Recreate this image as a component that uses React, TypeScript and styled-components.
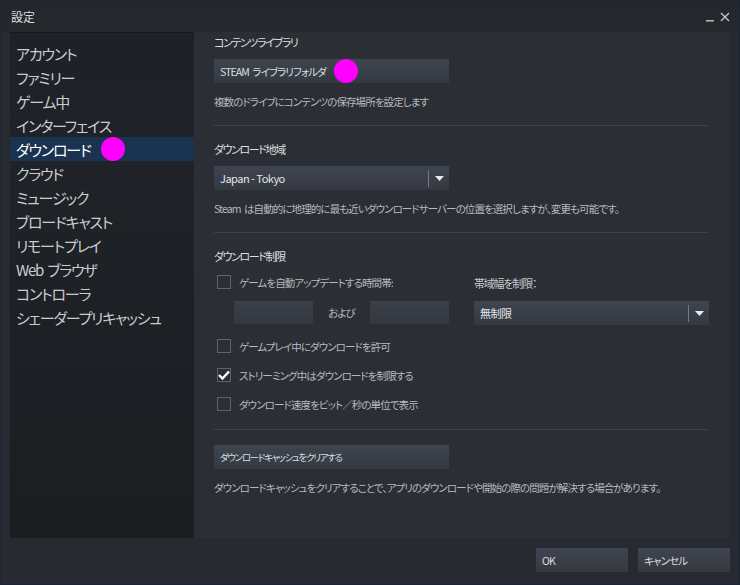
import React from "react";
import styled, { createGlobalStyle } from "styled-components";

const GlobalStyle = createGlobalStyle`
    html, body {
        margin: 0;
        padding: 0;
        background: #22252a;
    }
    * {
        box-sizing: border-box;
    }
`;

const fontStack = `"Noto Sans CJK JP", "Noto Sans", "Liberation Sans", sans-serif`;

const Window = styled.div`
    width: 740px;
    height: 585px;
    display: flex;
    flex-direction: column;
    background: #272a30;
    border: 1px solid #1a2536;
    font-family: ${fontStack};
    font-feature-settings: "palt";
    word-spacing: 2px;
    color: #dcdedf;
    overflow: hidden;
`;

const TitleBar = styled.header`
    height: 31px;
    flex: none;
    display: flex;
    align-items: center;
    justify-content: space-between;
    padding: 0 9px 0 10px;
    background: #24272c;
    font-size: 12px;
`;

const WindowControls = styled.div`
    display: flex;
    align-items: center;
    gap: 6px;
`;

const Body = styled.div`
    flex: 1;
    display: flex;
    padding: 0 10px 0 9px;
    min-height: 0;
`;

const Sidebar = styled.nav`
    width: 184px;
    flex: none;
    display: flex;
    flex-direction: column;
    padding-top: 8px;
    background: linear-gradient(180deg, #1e2129 0%, #1f2227 30%, #1b1d21 100%);
    border-top: 1px solid #15171b;
`;

const NavItem = styled.div<{ $active?: boolean }>`
    height: 24px;
    display: flex;
    align-items: center;
    gap: 10px;
    padding-left: 6px;
    font-size: 15px;
    letter-spacing: -1.2px;
    color: ${(p) => (p.$active ? "#ffffff" : "#c9cdd0")};
    background: ${(p) => (p.$active ? "#1a3350" : "transparent")};
    white-space: nowrap;
`;

const Dot = styled.span`
    width: 24px;
    height: 24px;
    border-radius: 50%;
    background: #ff00ff;
    flex: none;
`;

const Content = styled.main`
    flex: 1;
    display: flex;
    flex-direction: column;
    padding: 2px 21px 0 20px;
    background: #2b2e34;
    min-width: 0;
`;

const SectionTitle = styled.div`
    height: 16px;
    line-height: 16px;
    font-size: 11px;
    letter-spacing: -1.4px;
    color: #dcdedf;
`;

const Description = styled.div`
    height: 16px;
    line-height: 16px;
    font-size: 10.5px;
    letter-spacing: -0.9px;
    color: #b6babe;
    margin-top: 11px;
    white-space: nowrap;
`;

const Separator = styled.hr`
    border: none;
    height: 1px;
    background: #3d4148;
    margin: 15px 0;
`;

const GreyButton = styled.div<{ $small?: boolean }>`
    width: 235px;
    height: 24px;
    display: flex;
    align-items: center;
    gap: 8px;
    padding-left: 6px;
    margin-top: 9px;
    background: linear-gradient(180deg, #3f4550 0%, #343941 100%);
    font-size: ${(p) => (p.$small ? "9.5px" : "10.5px")};
    letter-spacing: ${(p) => (p.$small ? "-1.3px" : "-0.9px")};
    color: #dcdedf;
    white-space: nowrap;
`;

const Select = styled.div<{ $width: number }>`
    width: ${(p) => p.$width}px;
    height: 24px;
    display: flex;
    align-items: center;
    background: linear-gradient(180deg, #3f4550 0%, #343941 100%);
    font-size: 11px;
    letter-spacing: -0.5px;
    word-spacing: 0;
    color: #e4e6e8;
`;

const SelectValue = styled.span`
    flex: 1;
    padding-left: 6px;
`;

const SelectDivider = styled.span`
    width: 1px;
    height: 17px;
    background: #737a84;
`;

const SelectArrow = styled.span`
    width: 20px;
    display: flex;
    justify-content: center;
    align-items: center;
`;

const LimitGrid = styled.div`
    display: grid;
    grid-template-columns: 235px 235px;
    column-gap: 25px;
    margin-top: 9px;
`;

const CheckRow = styled.label<{ $top?: number }>`
    display: flex;
    align-items: center;
    height: 16px;
    gap: 8px;
    padding-left: 3px;
    margin-top: ${(p) => p.$top ?? 0}px;
    font-size: 10.5px;
    letter-spacing: -0.9px;
    color: #b6babe;
    white-space: nowrap;
`;

const Box = styled.span`
    width: 14px;
    height: 14px;
    flex: none;
    border: 1px solid #5d636b;
    display: flex;
    align-items: center;
    justify-content: center;
`;

const TimeRow = styled.div`
    display: flex;
    align-items: center;
    margin-top: 11px;
    padding-left: 20px;
    font-size: 10.5px;
    letter-spacing: -0.9px;
    color: #b6babe;
`;

const TimeInput = styled.div`
    width: 79px;
    height: 23px;
    background: linear-gradient(180deg, #3a3f48 0%, #343941 100%);
`;

const AndLabel = styled.span`
    width: 57px;
    text-align: center;
`;

const RightColumn = styled.div`
    display: flex;
    flex-direction: column;
`;

const RightLabel = styled.div`
    height: 16px;
    line-height: 16px;
    margin-top: 2px;
    margin-bottom: 10px;
    font-size: 11px;
    letter-spacing: -1.2px;
    color: #c6cacd;
`;

const Footer = styled.footer`
    height: 46px;
    flex: none;
    display: flex;
    justify-content: flex-end;
    align-items: flex-start;
    gap: 10px;
    padding: 10px 9px 0 0;
`;

const FooterButton = styled.div`
    width: 92px;
    height: 24px;
    display: flex;
    align-items: center;
    padding-left: 6px;
    background: linear-gradient(180deg, #3f4550 0%, #343941 100%);
    font-size: 10.5px;
    letter-spacing: -0.9px;
    color: #dcdedf;
`;

const Arrow = () => (
    <svg width="9" height="5" viewBox="0 0 9 5">
        <path d="M0 0 H9 L4.5 5 Z" fill="#e8eaec" />
    </svg>
);

const Check = () => (
    <svg width="12" height="10" viewBox="0 0 12 10">
        <path d="M1 5 L4.5 8.5 L11 1.5" stroke="#ffffff" strokeWidth="2.4" fill="none" />
    </svg>
);

const navItems = [
    "アカウント",
    "ファミリー",
    "ゲーム中",
    "インターフェイス",
    "ダウンロード",
    "クラウド",
    "ミュージック",
    "ブロードキャスト",
    "リモートプレイ",
    "Web ブラウザ",
    "コントローラ",
    "シェーダープリキャッシュ",
];

const App = () => {
    return (
        <>
            <GlobalStyle />
            <Window>
                <TitleBar>
                    <span>設定</span>
                    <WindowControls>
                        <svg width="8" height="10" viewBox="0 0 8 10">
                            <rect x="0" y="8" width="8" height="1.5" fill="#b8bcbf" />
                        </svg>
                        <svg width="10" height="10" viewBox="0 0 10 10">
                            <path d="M1 1 L9 9 M9 1 L1 9" stroke="#c0c4c8" strokeWidth="1.4" />
                        </svg>
                    </WindowControls>
                </TitleBar>
                <Body>
                    <Sidebar>
                        {navItems.map((item) => (
                            <NavItem key={item} $active={item === "ダウンロード"}>
                                {item}
                                {item === "ダウンロード" && <Dot />}
                            </NavItem>
                        ))}
                    </Sidebar>
                    <Content>
                        <SectionTitle>コンテンツライブラリ</SectionTitle>
                        <GreyButton>
                            STEAM ライブラリフォルダ
                            <Dot />
                        </GreyButton>
                        <Description>複数のドライブにコンテンツの保存場所を設定します</Description>
                        <Separator />

                        <SectionTitle>ダウンロード地域</SectionTitle>
                        <Select $width={235} style={{ marginTop: 9 }}>
                            <SelectValue>Japan - Tokyo</SelectValue>
                            <SelectDivider />
                            <SelectArrow>
                                <Arrow />
                            </SelectArrow>
                        </Select>
                        <Description>
                            Steam は自動的に地理的に最も近いダウンロードサーバーの位置を選択しますが、変更も可能です。
                        </Description>
                        <Separator />

                        <SectionTitle>ダウンロード制限</SectionTitle>
                        <LimitGrid>
                            <div>
                                <CheckRow $top={1}>
                                    <Box />
                                    ゲームを自動アップデートする時間帯:
                                </CheckRow>
                                <TimeRow>
                                    <TimeInput />
                                    <AndLabel>および</AndLabel>
                                    <TimeInput />
                                </TimeRow>
                            </div>
                            <RightColumn>
                                <RightLabel>帯域幅を制限：</RightLabel>
                                <Select $width={235}>
                                    <SelectValue>無制限</SelectValue>
                                    <SelectDivider />
                                    <SelectArrow>
                                        <Arrow />
                                    </SelectArrow>
                                </Select>
                            </RightColumn>
                        </LimitGrid>
                        <CheckRow $top={13}>
                            <Box />
                            ゲームプレイ中にダウンロードを許可
                        </CheckRow>
                        <CheckRow $top={13}>
                            <Box>
                                <Check />
                            </Box>
                            ストリーミング中はダウンロードを制限する
                        </CheckRow>
                        <CheckRow $top={13}>
                            <Box />
                            ダウンロード速度をビット／秒の単位で表示
                        </CheckRow>
                        <Separator style={{ marginTop: 17 }} />

                        <GreyButton $small style={{ marginTop: 0 }}>
                            ダウンロードキャッシュをクリアする
                        </GreyButton>
                        <Description>
                            ダウンロードキャッシュをクリアすることで、アプリのダウンロードや開始の際の問題が解決する場合があります。
                        </Description>
                    </Content>
                </Body>
                <Footer>
                    <FooterButton>OK</FooterButton>
                    <FooterButton>キャンセル</FooterButton>
                </Footer>
            </Window>
        </>
    );
};

export default App;
